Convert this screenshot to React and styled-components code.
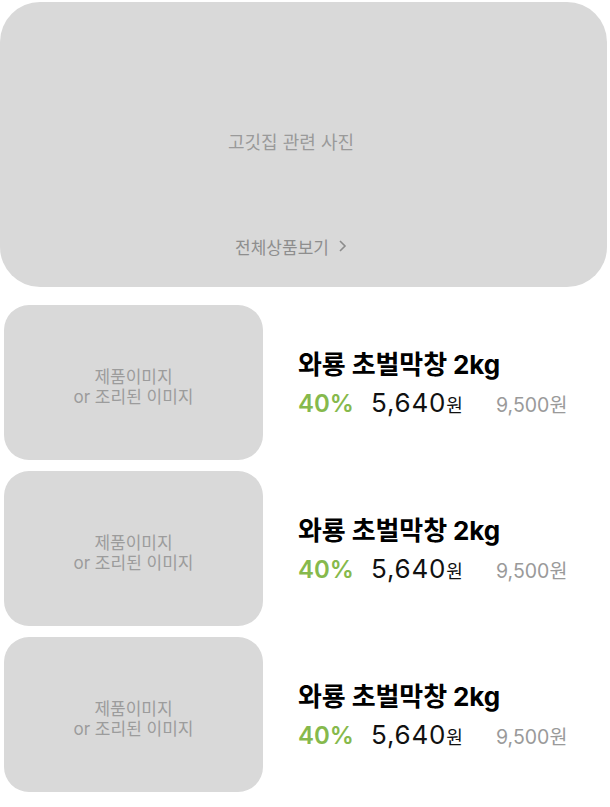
import styled, { createGlobalStyle } from "styled-components";

const GlobalStyle = createGlobalStyle`
  body {
    margin: 0;
    background: #fff;
    font-family: "Inter", "Noto Sans CJK KR", sans-serif;
  }
`;

const products = [1, 2, 3].map((id) => ({
  id,
  name: "와룡 초벌막창 2kg",
  rate: "40%",
  price: "5,640",
  origin: "9,500원",
}));

export default function App() {
  return (
    <Page>
      <GlobalStyle />
      <Hero>
        <HeroLabel>고깃집 관련 사진</HeroLabel>
        <AllLink>
          전체상품보기
          <svg width="9" height="14" viewBox="0 0 9 14" fill="none">
            <path d="M2 2 7 7 2 12" stroke="#8c8c8c" strokeWidth="1.6" />
          </svg>
        </AllLink>
      </Hero>
      <List>
        {products.map((p) => (
          <Item key={p.id}>
            <Thumb>
              제품이미지
              <br />
              or 조리된 이미지
            </Thumb>
            <Info>
              <Name>{p.name}</Name>
              <PriceRow>
                <Rate>{p.rate}</Rate>
                <Price>
                  {p.price}
                  <Won>원</Won>
                </Price>
                <Origin>{p.origin}</Origin>
              </PriceRow>
            </Info>
          </Item>
        ))}
      </List>
    </Page>
  );
}

const Page = styled.div`
  width: 610px;
  padding-top: 2px;
`;

const Hero = styled.section`
  width: 607px;
  height: 285px;
  box-sizing: border-box;
  padding: 44px 25px 31px 0;
  background: #d9d9d9;
  border-radius: 40px;
  display: flex;
  flex-direction: column;
  align-items: center;
`;

const HeroLabel = styled.div`
  flex: 1;
  display: flex;
  align-items: center;
  font-size: 18px;
  color: #9a9a9a;
`;

const AllLink = styled.div`
  height: 20px;
  display: flex;
  align-items: center;
  gap: 9px;
  font-size: 17px;
  color: #8e8e8e;
`;

const List = styled.div`
  margin-top: 18px;
  padding-left: 4px;
  display: flex;
  flex-direction: column;
  gap: 11px;
`;

const Item = styled.div`
  display: flex;
  align-items: center;
  gap: 35px;
`;

const Thumb = styled.div`
  width: 259px;
  height: 155px;
  box-sizing: border-box;
  padding-top: 9px;
  border-radius: 25px;
  background: #d9d9d9;
  display: flex;
  align-items: center;
  justify-content: center;
  text-align: center;
  font-size: 17px;
  line-height: 20px;
  color: #9c9c9c;
`;

const Info = styled.div`
  display: flex;
  flex-direction: column;
  gap: 6px;
  margin-bottom: 3px;
`;

const Name = styled.div`
  font-size: 26px;
  font-weight: 700;
  color: #000;
  letter-spacing: -0.1px;
`;

const PriceRow = styled.div`
  display: flex;
  align-items: baseline;
`;

const Rate = styled.span`
  font-size: 24px;
  font-weight: 600;
  color: #86b94c;
  width: 73px;
`;

const Price = styled.span`
  font-size: 26px;
  letter-spacing: 0.8px;
  color: #111;
  width: 125px;
`;

const Won = styled.span`
  font-size: 18px;
  letter-spacing: 0;
`;

const Origin = styled.span`
  font-size: 19.5px;
  color: #9a9a9a;
`;
